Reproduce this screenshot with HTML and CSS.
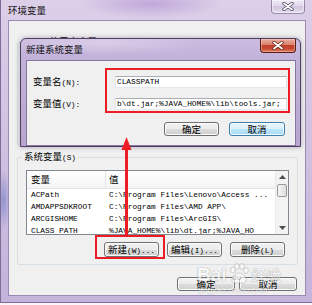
FILE: index.html
```html
<!DOCTYPE html>
<html lang="zh-CN">
<head>
<meta charset="utf-8">
<title>环境变量</title>
<link rel="stylesheet" href="styles.css">
</head>
<body>
<div class="win outer">
  <div class="titlebar">
    <span class="title">环境变量</span>
    <span class="close close-glass">
      <svg width="12" height="9" viewBox="0 0 12 9"><path d="M2 1.5 L10 7.5 M10 1.5 L2 7.5" stroke="#4a4458" stroke-width="3.4" stroke-linecap="round"/><path d="M2 1.5 L10 7.5 M10 1.5 L2 7.5" stroke="#fff" stroke-width="1.8" stroke-linecap="round"/></svg>
    </span>
  </div>
  <div class="client">
    <fieldset class="group user-group">
      <legend><span class="a">lucky</span> 的用户变量<span class="a">(U)</span></legend>
    </fieldset>
    <fieldset class="group sys-group">
      <legend>系统变量<span class="a">(S)</span></legend>
      <div class="list">
        <div class="list-main">
          <div class="lrow head"><span class="c1">变量</span><span class="c2">值</span></div>
          <div class="lrow data"><span class="c1">ACPath</span><span class="c2">C:\Program Files\Lenovo\Access ...</span></div>
          <div class="lrow data"><span class="c1">AMDAPPSDKROOT</span><span class="c2">C:\Program Files\AMD APP\</span></div>
          <div class="lrow data"><span class="c1">ARCGISHOME</span><span class="c2">C:\Program Files\ArcGIS\</span></div>
          <div class="lrow data"><span class="c1">CLASS PATH</span><span class="c2">%JAVA_HOME%\lib\dt.jar;%JAVA_HO</span></div>
        </div>
        <div class="scroll">
          <div class="sb-btn"><svg width="7" height="4" viewBox="0 0 7 4"><path d="M0 4 L3.5 0 L7 4 Z" fill="#4d4d4d"/></svg></div>
          <div class="sb-thumb"></div>
          <div class="sb-track"></div>
          <div class="sb-btn"><svg width="7" height="4" viewBox="0 0 7 4"><path d="M0 0 L3.5 4 L7 0 Z" fill="#4d4d4d"/></svg></div>
        </div>
      </div>
      <div class="btnrow">
        <button class="btn">新建<span class="a">(W)...</span></button>
        <button class="btn">编辑<span class="a">(I)...</span></button>
        <button class="btn">删除<span class="a">(L)</span></button>
      </div>
    </fieldset>
    <div class="footer">
      <button class="btn wide">确定</button>
      <button class="btn wide">取消</button>
    </div>
  </div>
</div>

<div class="win inner">
  <div class="titlebar">
    <span class="title">新建系统变量</span>
    <span class="close close-red">
      <svg width="12" height="9" viewBox="0 0 12 9"><path d="M2 1.5 L10 7.5 M10 1.5 L2 7.5" stroke="#6a2418" stroke-width="3.4" stroke-linecap="round"/><path d="M2 1.5 L10 7.5 M10 1.5 L2 7.5" stroke="#fff" stroke-width="1.8" stroke-linecap="round"/></svg>
    </span>
  </div>
  <div class="dlg-client">
    <div class="fields">
      <label class="flabel">变量名<span class="a">(N):</span></label>
      <div class="field">CLASSPATH</div>
      <label class="flabel">变量值<span class="a">(V):</span></label>
      <div class="field">b\dt.jar;%JAVA_HOME%\lib\tools.jar;</div>
    </div>
    <div class="dlg-btns">
      <button class="btn">确定</button>
      <button class="btn btn-default">取消</button>
    </div>
  </div>
</div>

<div class="mark mark-fields"></div>
<div class="mark mark-new"></div>
<svg class="arrow" width="18" height="102" viewBox="0 0 18 102">
  <line x1="8.5" y1="12" x2="8.5" y2="102" stroke="#ee1c24" stroke-width="3"/>
  <path d="M8.5 3 L3.5 16 L13.5 16 Z" fill="#ee1c24"/>
</svg>

<div class="watermark">
  <div class="wm-logo">
    <span class="wm-bai">Bai</span>
    <span class="wm-paw">
      <svg width="22" height="22" viewBox="0 0 22 22">
        <ellipse cx="5" cy="7" rx="2.3" ry="3" />
        <ellipse cx="9" cy="3.5" rx="2.3" ry="3" />
        <ellipse cx="14" cy="3.5" rx="2.3" ry="3" />
        <ellipse cx="18" cy="7.5" rx="2.3" ry="3" />
        <path d="M11 10 C7 10 3 15 4 18 C5 21 9 20 11 20 C13 20 17 21 18 18 C19 15 15 10 11 10 Z" />
      </svg>
      <span class="wm-du">du</span>
    </span>
    <span class="wm-jy">经验</span>
  </div>
  <div class="wm-url">jingyan.baidu.com</div>
</div>
</body>
</html>
```

FILE: styles.css
```css
* { box-sizing: border-box; }
html, body { margin: 0; padding: 0; }
body {
  width: 312px;
  height: 305px;
  overflow: hidden;
  position: relative;
  background: #f7f5fa;
  font-family: "Noto Sans CJK SC", "Noto Sans", sans-serif;
  font-size: 9.5px;
  color: #000;
}
.a {
  font-family: "Liberation Mono", "DejaVu Sans Mono", monospace;
  font-size: 7.8px;
}

.win { position: absolute; display: flex; flex-direction: column; }

/* outer window */
.outer {
  left: 0;
  top: 0;
  width: 312px;
  height: 303px;
  padding: 0 6px 6px 7px;
  border-left: 1px solid #7d6c96;
  border-bottom: 1px solid #7d6c96;
  background:
    radial-gradient(ellipse 70px 14px at 150px 4px, rgba(160, 120, 200, 0.45), transparent),
    radial-gradient(ellipse 8px 30px at 2px 200px, rgba(120, 130, 200, 0.7), transparent),
    linear-gradient(180deg, #dccfe8 0%, #d2c3e2 40%, #c4b3da 100%);
}
.titlebar {
  display: flex;
  align-items: flex-start;
  flex: none;
}
.outer .titlebar { height: 20px; }
.title {
  line-height: 20px;
  color: #111;
  white-space: nowrap;
}
.close {
  margin-left: auto;
  display: flex;
  align-items: center;
  justify-content: center;
  border-radius: 0 0 4px 4px;
}
.close-glass {
  width: 34px;
  height: 14px;
  margin-right: 1px;
  border: 1px solid rgba(90, 70, 115, 0.55);
  border-top: none;
  background: linear-gradient(rgba(255,255,255,0.5), rgba(255,255,255,0.2) 50%, rgba(190,175,210,0.35) 50%, rgba(255,255,255,0.35));
  box-shadow: inset 0 0 0 1px rgba(255,255,255,0.45);
}
.client {
  flex: 1;
  display: flex;
  flex-direction: column;
  background: #f0f0f0;
  border: 1px solid #9a8ab2;
  padding: 13px 7px 0 8px;
}

.group {
  margin: 0;
  border: 1px solid #d5dfe5;
  border-radius: 2px;
  padding: 5px 8px 7px 8px;
  min-width: 0;
}
.group legend {
  padding: 0 2px;
  margin-left: -4px;
  line-height: 14px;
  white-space: nowrap;
}
.user-group { height: 112px; margin-bottom: 3px; }

.list {
  display: flex;
  height: 65px;
  border: 1px solid #828790;
  background: #fff;
}
.list-main { flex: 1; overflow: hidden; }
.lrow {
  display: flex;
  height: 12px;
  line-height: 12px;
  white-space: nowrap;
}
.lrow.head {
  height: 18px;
  line-height: 17px;
  border-bottom: 1px solid #e5e5e5;
  background: linear-gradient(#ffffff, #f4f5f7);
}
.lrow.data {
  font-family: "Liberation Mono", "DejaVu Sans Mono", monospace;
  font-size: 7.8px;
}
.c1 { width: 79px; flex: none; padding-left: 4px; overflow: hidden; }
.head .c1 { border-right: 1px solid #e5e5e5; }
.c2 { padding-left: 3px; }

.scroll {
  width: 13px;
  flex: none;
  display: flex;
  flex-direction: column;
  background: #f3f3f3;
  border-left: 1px solid #e9e9e9;
}
.sb-btn {
  height: 12px;
  display: flex;
  align-items: center;
  justify-content: center;
}
.sb-thumb {
  height: 13px;
  margin: 1px 1px 0;
  border: 1px solid #999;
  border-radius: 2px;
  background: linear-gradient(90deg, #f5f5f5, #dedede);
}
.sb-track { flex: 1; }

.btn {
  font-family: inherit;
  font-size: 9.5px;
  color: #000;
  margin: 0;
  padding: 0;
  width: 55px;
  height: 15px;
  line-height: 13px;
  border: 1px solid #707070;
  border-radius: 3px;
  background: linear-gradient(#f2f2f2 0%, #ebebeb 50%, #dddddd 50%, #cfcfcf 100%);
  box-shadow: inset 0 0 0 1px #fbfbfb;
  white-space: nowrap;
}
.btn-default {
  width: 56px;
  border-color: #3c7fb1;
  background: linear-gradient(#eaf6fd 0%, #d9f0fc 50%, #bee6fd 50%, #a7d9f5 100%);
  box-shadow: inset 0 0 0 1px #f4fbff;
}
.btnrow {
  display: flex;
  justify-content: flex-end;
  gap: 8px;
  margin-top: 7px;
  padding-right: 4px;
}
.footer {
  display: flex;
  justify-content: flex-end;
  gap: 4px;
  margin-top: 12px;
  padding-right: 1px;
}
.footer .btn { width: 58px; height: 14px; line-height: 12px; }

/* inner dialog */
.inner {
  left: 20px;
  top: 38px;
  width: 281px;
  height: 109px;
  padding: 0 4px 4px 5px;
  border: 1px solid #4e3f63;
  border-radius: 6px 6px 0 0;
  background:
    radial-gradient(ellipse 100px 12px at 80px 4px, rgba(255,255,255,0.3), transparent),
    linear-gradient(180deg, #cbbbe0 0%, #c2b1d9 20px, #b8a6d0 100%);
  box-shadow: 0 0 5px rgba(40, 20, 60, 0.35);
}
.inner .titlebar { height: 21px; }
.inner .title { line-height: 21px; margin-left: 0; }
.close-red {
  width: 36px;
  height: 14px;
  margin-right: 0;
  border: 1px solid #5a1c12;
  border-top: none;
  background: linear-gradient(#eab0a4 0%, #d9806c 45%, #c2402a 50%, #c44a33 75%, #df8669 100%);
  box-shadow: inset 0 0 0 1px rgba(255, 200, 190, 0.45);
}
.dlg-client {
  flex: 1;
  background: #f0f0f0;
  border: 1px solid #8676a0;
  padding: 14px 8px 9px 6px;
}
.fields {
  display: grid;
  grid-template-columns: 82px 1fr;
  row-gap: 8px;
  align-items: center;
}
.flabel { line-height: 12px; white-space: nowrap; }
.field {
  height: 12px;
  border: 1px solid;
  border-color: #abadb3 #dbdfe6 #e3e9ef #e2e3ea;
  background: #fff;
  padding-left: 1px;
  font-family: "Liberation Mono", "DejaVu Sans Mono", monospace;
  font-size: 7.8px;
  line-height: 10px;
  white-space: nowrap;
  overflow: hidden;
}
.dlg-btns {
  display: flex;
  justify-content: flex-end;
  gap: 10px;
  margin-top: 11px;
  padding-right: 2px;
}
.dlg-btns .btn { height: 14px; line-height: 12px; }

/* annotations */
.mark {
  position: absolute;
  border: 2px solid #ed1c24;
}
.mark-fields { left: 105px; top: 68px; width: 185px; height: 45px; }
.mark-new { left: 95px; top: 235px; width: 70px; height: 24px; }
.arrow { position: absolute; left: 118px; top: 134px; }

/* watermark */
.watermark {
  position: absolute;
  left: 197px;
  top: 261px;
  opacity: 0.6;
  color: #fff;
  pointer-events: none;
}
.wm-logo { display: flex; align-items: flex-end; height: 24px; }
.wm-bai {
  font-family: "Liberation Sans", sans-serif;
  font-weight: bold;
  font-size: 19px;
  line-height: 20px;
  text-shadow: 0 0 1px #777, 0 0 1px #777;
}
.wm-paw { position: relative; width: 22px; height: 22px; margin: 0 2px 0 1px; }
.wm-paw svg { fill: #fff; stroke: #888; stroke-width: 0.6; }
.wm-du {
  position: absolute;
  left: 4px;
  top: 10px;
  font-family: "Liberation Sans", sans-serif;
  font-weight: bold;
  font-size: 8px;
  color: #bbb;
}
.wm-jy {
  font-size: 15px;
  line-height: 20px;
  text-shadow: 0 0 1px #777, 0 0 1px #777;
}
.wm-url {
  font-family: "Liberation Sans", sans-serif;
  font-size: 8.5px;
  line-height: 10px;
  margin-left: 2px;
  text-shadow: 0 0 1px #777;
}
```
